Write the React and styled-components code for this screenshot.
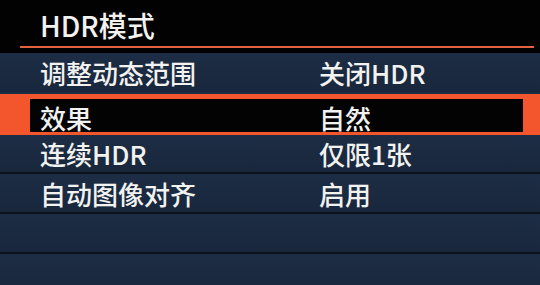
import React from 'react';
import styled, { createGlobalStyle } from 'styled-components';

const GlobalStyle = createGlobalStyle`
    html, body {
        margin: 0;
        padding: 0;
        background: #000;
    }
`;

const Screen = styled.div`
    width: 540px;
    height: 285px;
    overflow: hidden;
    background: #020203;
    font-family: "Noto Sans CJK SC", "Noto Sans", sans-serif;
    font-weight: 500;
    color: #f2f2f0;
`;

const Header = styled.div`
    height: 46px;
    padding-left: 40px;
    display: flex;
    align-items: center;
    font-size: 28px;
    letter-spacing: 0;
    box-sizing: border-box;
    padding-top: 4px;
`;

const HeaderRule = styled.div`
    height: 2px;
    margin: 0 6px 5px 20px;
    background: #e4623f;
`;

const List = styled.div`
    display: flex;
    flex-direction: column;
`;

const Row = styled.div`
    box-sizing: border-box;
    height: ${p => p.$h || 40}px;
    display: grid;
    grid-template-columns: 279px 1fr;
    align-items: center;
    font-size: 26px;
    padding-left: 40px;
    background: linear-gradient(#1d2d45, #18273c);
    border-bottom: 2px solid ${p => p.$divider ? '#0a121d' : 'transparent'};

    ${p => p.$selected && `
        background: #030304;
        border-style: solid;
        border-color: #f3552c;
        border-width: 5px 17px 3px 30px;
        padding-left: 10px;
    `}
`;

const Cell = styled.span`
    white-space: nowrap;
`;

const items = [
    { label: '调整动态范围', value: '关闭HDR', h: 41 },
    { label: '效果', value: '自然', selected: true, h: 41 },
    { label: '连续HDR', value: '仅限1张', divider: true, h: 39 },
    { label: '自动图像对齐', value: '启用', divider: true, h: 40 },
    { label: '', value: '', divider: true, h: 40 },
    { label: '', value: '', h: 40 },
];

export default function App() {
    return (
        <React.Fragment>
            <GlobalStyle />
            <Screen>
                <Header>HDR模式</Header>
                <HeaderRule />
                <List>
                    {items.map((it, i) => (
                        <Row key={i} $selected={it.selected} $divider={it.divider} $h={it.h}>
                            <Cell>{it.label}</Cell>
                            <Cell>{it.value}</Cell>
                        </Row>
                    ))}
                </List>
            </Screen>
        </React.Fragment>
    );
}
